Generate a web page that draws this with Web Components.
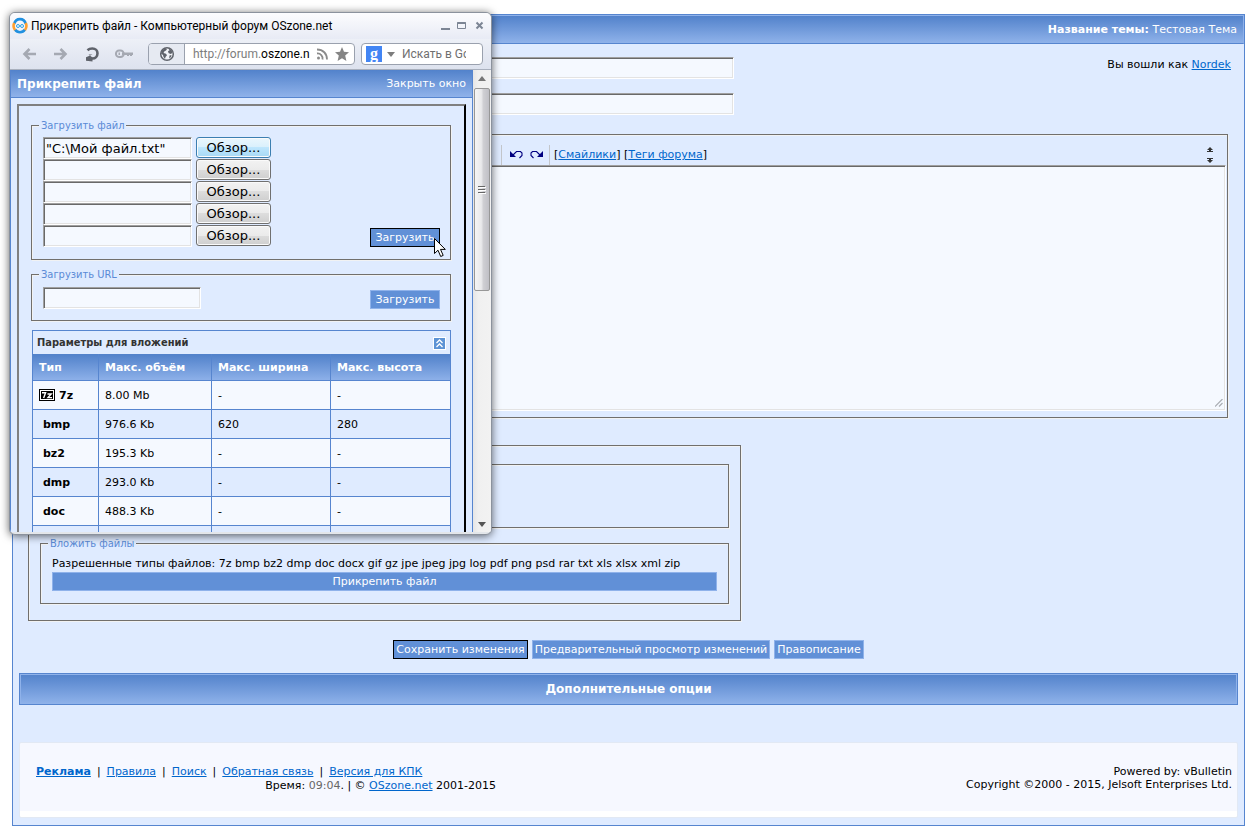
<!DOCTYPE html>
<html lang="ru">
<head>
<meta charset="utf-8">
<title>Компьютерный форум OSzone.net</title>
<style>
  body {
    margin: 0;
    background: #fff;
    font: 11px/14px "DejaVu Sans", Verdana, sans-serif;
    color: #000;
    --panel: #dfebff;
    --field: #f5f9ff;
    --edge: #5685cf;
    --fill: #6190d7;
    --fill-edge: #8fb2ea;
    --bar: linear-gradient(#5282cb, #8fb2ea);
    --link: #0066cc;
    --etch: #716f6c;
    --etch-light: #f1f2f3;
  }
</style>
</head>
<body>
<forum-app></forum-app>

<script>
const base = `
  *, *::before, *::after { box-sizing: border-box; }
  :host { display: block; box-sizing: border-box; }
  a { color: var(--link); text-decoration: underline; }
  .field {
    height: 22px; padding: 0 2px; border: 1px solid; border-color: #a0a0a0 #fff #fff #a0a0a0;
    background: var(--field); box-shadow: inset 1px 1px 0 #696969, inset -1px -1px 0 #e3e3e3;
    font: 13px/18px "DejaVu Sans", Verdana, sans-serif; color: #000; border-radius: 0; outline: 0;
  }
`;

function define(name, css, html, setup) {
  customElements.define(name, class extends HTMLElement {
    constructor() {
      super();
      this.attachShadow({ mode: "open" }).innerHTML = `<style>${base}${css}</style>${html}`;
    }
    connectedCallback() { if (setup) setup(this.shadowRoot, this); }
  });
}

/* Etched frame with an optional caption */
define("group-box", `
  fieldset { margin: 0; min-width: 0; height: 100%; border: 1px solid var(--etch);
    padding: var(--box-padding, 0); box-shadow: 1px 1px 0 var(--etch-light), inset 1px 1px 0 var(--etch-light); }
  legend { margin-left: -4px; padding: 0 2px; background: var(--panel); color: #5a8ad6;
    font: 11px/13px "DejaVu Sans Condensed", Tahoma, sans-serif; }
`, `<fieldset><slot></slot></fieldset>`, (root, host) => {
  const label = host.getAttribute("label");
  if (label) {
    const legend = document.createElement("legend");
    legend.textContent = label;
    root.querySelector("fieldset").prepend(legend);
  }
});

define("push-button", `
  :host { display: inline-block; }
  button { display: block; width: 100%; height: 19px; padding: 1px 2px 0; border: 1px solid var(--fill-edge);
    background: var(--fill); color: #fff; font: 11px/16px "DejaVu Sans", Verdana, sans-serif; white-space: nowrap; }
  :host([primary]) button { border-color: #000; }
`, `<button type="button"><slot></slot></button>`);

define("title-bar", `
  :host { display: flex; align-items: center; justify-content: var(--justify, space-between);
    background: var(--bar); color: #fff; border: 1px solid var(--fill-edge); border-width: 1px 1px 0 0; }
`, `<slot></slot>`);

define("file-row", `
  :host { display: flex; gap: 4px; height: 22px; }
  .field { width: 149px; }
  button { width: 75px; height: 21px; padding: 1px 0 0; border: 1px solid #707070; border-radius: 3px;
    background: linear-gradient(#f2f2f2, #ebebeb 50%, #dddddd 50%, #cfcfcf);
    box-shadow: inset 0 0 0 1px #fafafa; font: 13px/18px "DejaVu Sans", Verdana, sans-serif; color: #000; }
  :host([hot]) button { border-color: #3c7fb1;
    background: linear-gradient(#eaf6fd, #d9f0fc 50%, #bee6fd 50%, #a7d9f5); }
`, `<input class="field" type="text" aria-label="Файл"><button type="button">Обзор...</button>`,
(root, host) => { root.querySelector("input").value = host.getAttribute("value") || ""; });

define("limits-table", `
  table { width: 100%; table-layout: fixed; border-collapse: collapse; border: 1px solid var(--edge); }
  caption { height: 24px; padding: 0 4px; border: 1px solid var(--edge); border-bottom: 0; color: #333;
    font: bold 11px/24px "DejaVu Sans Condensed", Tahoma, sans-serif; text-align: left; }
  .cap { display: flex; justify-content: space-between; align-items: center; }
  .cap button { width: 13px; height: 13px; padding: 0; border: 1px solid #fff; background: #5d93d5; display: block; }
  .cap svg { display: block; }
  thead tr { background: var(--bar); height: 26px; }
  th, td { border: 1px solid var(--edge); padding: 1px 6px 0; text-align: left; font-size: 11px; line-height: 14px; white-space: nowrap; }
  thead th { color: #fff; border-top-color: #5282cb; }
  tbody tr { height: 29px; }
  tbody tr:nth-child(odd) { background: var(--field); }
  tbody th { padding-left: 10px; }
  tbody th.icon { padding-left: 6px; }
  .seven { display: inline-block; width: 16px; height: 12px; margin-right: 4px; vertical-align: -2px; }
`, `<table>
  <caption><div class="cap"><span>Параметры для вложений</span>
    <button type="button" aria-label="Свернуть"><svg width="11" height="11" viewBox="0 0 11 11" fill="none" stroke="#fff" stroke-width="1.3"><path d="M2.5 5 5.5 2l3 3M2.5 9l3-3 3 3"/></svg></button></div></caption>
  <colgroup><col style="width:66px"><col style="width:113px"><col style="width:119px"><col></colgroup>
  <thead><tr><th>Тип</th><th>Макс. объём</th><th>Макс. ширина</th><th>Макс. высота</th></tr></thead>
  <tbody></tbody></table>`, root => {
  const icon = `<svg class="seven" viewBox="0 0 16 12"><path fill="#000" d="M0 0h16v12H0z"/><path fill="#fff" d="M1 1h14v10H1z"/><path fill="#000" d="M2 2h12v8H2z"/><path fill="none" stroke="#fff" stroke-width="1.4" d="M3 3.7h3.6L4.6 9M8.5 5h3.7L9 8.6h4"/></svg>`;
  root.querySelector("tbody").innerHTML = [
    ["7z", "8.00 Mb", "-", "-"], ["bmp", "976.6 Kb", "620", "280"], ["bz2", "195.3 Kb", "-", "-"],
    ["dmp", "293.0 Kb", "-", "-"], ["doc", "488.3 Kb", "-", "-"], ["", "", "", ""]
  ].map(([t, ...c]) => `<tr><th scope="row"${t === "7z" ? ' class="icon"' : ""}>${t === "7z" ? icon : ""}${t}</th>${c.map(v => `<td>${v}</td>`).join("")}</tr>`).join("");
});

define("browser-toolbar", `
  :host { display: flex; align-items: center; height: 31px; padding: 0 8px 0 11px;
    background: linear-gradient(#edf0f7, #dde2ee); border-bottom: 1px solid #a9b0bd; }
  svg { display: block; }
  .nav { display: flex; gap: 13px; flex: 0 0 127px; }
  .nav button, .g, .ico { border: 0; padding: 0; background: none; }
  .box { display: flex; align-items: center; height: 22px; border: 1px solid #9aa1ae; border-radius: 4px; background: #fff; overflow: hidden; }
  .address { flex: 1; }
  .globe { display: flex; align-items: center; justify-content: center; width: 36px; height: 20px; background: #e6eaf2; border-right: 1px solid #9aa1ae; }
  .url { flex: 1; min-width: 0; margin-left: 8px; font: 12px/18px Roboto, "Segoe UI", sans-serif; color: #7d7d7d; white-space: nowrap; overflow: hidden; }
  .url b { font-weight: normal; color: #000; }
  .icons { display: flex; gap: 6px; padding: 0 5px; }
  .search { width: 122px; margin-left: 6px; padding-left: 4px; }
  .g { width: 16px; height: 16px; background: #4285f4; color: #fff; font: bold 16px/12px "Liberation Serif", serif; }
  .tri { margin: 0 7px 0 5px; }
  .search input { width: 64px; border: 0; padding: 0; outline: 0; background: none; font: 12px/18px Roboto, "Segoe UI", sans-serif; }
  .search input::placeholder { color: #6f6f6f; }
`, `
  <div class="nav">
    <button type="button" aria-label="Назад"><svg width="18" height="16" viewBox="0 0 18 16" fill="none" stroke="#a5a9b2" stroke-width="2.6"><path d="M15 8H4M8.5 3 3.5 8l5 5"/></svg></button>
    <button type="button" aria-label="Вперёд"><svg width="18" height="16" viewBox="0 0 18 16" fill="none" stroke="#a5a9b2" stroke-width="2.6"><path d="M2 8h11M8.5 3l5 5-5 5"/></svg></button>
    <button type="button" aria-label="Обновить"><svg width="18" height="16" viewBox="0 0 18 16"><path fill="none" stroke="#5f636b" stroke-width="2.600" d="M4.500 4.200C6 2.800 7.500 2.500 9.300 2.500c3.300 0 5.200 2.100 5.200 4.700 0 3.200-2.200 5.300-5 5.300H8"/><path fill="#5f636b" d="M9.500 8.500v7L3 14.800v-3.500zM9.500 8.500H5.500l4 3z"/></svg></button>
    <button type="button" aria-label="Пароль"><svg width="20" height="16" viewBox="0 0 20 16"><path fill="none" stroke="#a5a9b2" stroke-width="2" d="M2 7.500a3 3 0 0 1 3-3h1.500a3 3 0 0 1 0 6.500H5a3 3 0 0 1-3-3.500z"/><path fill="#a5a9b2" d="M8 6.500h11v2.500h-1v1h-2v-1h-1v1h-2v-1H8zM4.500 6.500h1.500v2.500H4.500z"/></svg></button>
  </div>
  <div class="box address">
    <span class="globe"><svg width="16" height="16" viewBox="0 0 16 16"><circle cx="8" cy="8" r="6.300" fill="#f1f3f7" stroke="#5f636b" stroke-width="1.500"/><path fill="#5f636b" d="M3 4.500 6 2.300l2 .7-1 1.500-1.500.8L4.500 7l2.500.8 1 1.500L6.500 11 6 13 4.500 11 4 9 2 7.500zM9.500 2.500l3 1.500 1 3-2 1-2-1-.5-2 1.500-.5zM10.500 9.500l2-.5-.5 2-1.800 1.500z"/></svg></span>
    <span class="url" role="textbox" contenteditable="true" spellcheck="false" aria-label="Адрес">http://forum.<b>oszone.n</b></span>
    <span class="icons">
      <button type="button" class="ico" aria-label="RSS"><svg width="14" height="14" viewBox="0 0 14 14" fill="none" stroke="#8b8b8b" stroke-width="1.800"><circle cx="3.500" cy="11" r="1.500" fill="#8b8b8b" stroke="none"/><path d="M2 6.500a5 5 0 0 1 5.500 6M2 2.500c6 0 10 4 10 10"/></svg></button>
      <button type="button" class="ico" aria-label="Закладки"><svg width="14" height="14" viewBox="0 0 14 14"><path fill="#858585" d="m7 0 2 4.800 5 .4-3.800 3.400L11.400 14 7 11.200 2.600 14l1.200-5.400L0 5.200l5-.4z"/></svg></button>
    </span>
  </div>
  <div class="box search">
    <button type="button" class="g" aria-label="Поисковая система">g</button>
    <svg class="tri" width="8" height="5" viewBox="0 0 8 5"><path fill="#7d7d7d" d="M0 0h8L4 5z"/></svg>
    <input type="text" placeholder="Искать в Go" aria-label="Поиск">
  </div>`);

define("scroll-strip", `
  :host { display: flex; flex-direction: column; align-items: center; width: 18px; padding: 6px 1px 5px;
    background: linear-gradient(90deg, #e6e6e6, #f0f0f0 30%, #f2f2f2); }
  svg { display: block; flex: none; }
  .thumb { display: flex; align-items: center; justify-content: center; width: 16px; height: 203px; margin: 7px 0 auto;
    border: 1px solid #979797; border-radius: 2px; background: linear-gradient(90deg, #f5f5f5, #e9e9eb 45%, #cfcfd3 60%, #bfbfc5); }
`, `<svg width="8" height="5" viewBox="0 0 8 5"><path fill="#777" d="M0 5h8L4 0z"/></svg>
  <div class="thumb"><svg width="8" height="8" viewBox="0 0 8 8"><path fill="#666" d="M0 0h7v1H0zM0 3h7v1H0zM0 6h7v1H0z"/><path fill="#fff" d="M1 1h7v1H1zM1 4h7v1H1zM1 7h7v1H1z"/></svg></div>
  <svg width="8" height="5" viewBox="0 0 8 5"><path fill="#555" d="M0 0h8L4 5z"/></svg>`);

define("popup-window", `
  :host { display: flex; flex-direction: column; width: 483px; height: 523px; overflow: hidden;
    border: 1px solid #8b929d; border-radius: 6px; background: #e3e6ea; box-shadow: 0 1px 8px rgba(0,0,0,.6); }
  .caption { display: flex; align-items: center; gap: 3px; height: 26px; padding: 0 7px 0 2px; background: linear-gradient(#fcfcfe, #e8ebf5);
    font: 12px/18px Roboto, "Segoe UI", sans-serif; color: #000; flex: none; }
  .caption span { flex: 1; white-space: nowrap; }
  .caption svg { display: block; }
  .view { display: flex; flex: 1; min-height: 0; margin: 0 0 2px; background: var(--panel); }
  .page { flex: 1; min-width: 0; display: flex; flex-direction: column; border-right: 1px solid var(--edge); border-left: 1px solid var(--edge); }
  title-bar { height: 28px; flex: none; padding: 1px 6px 0; border: 0; border-bottom: 1px solid var(--edge); }
  title-bar h1 { margin: 0; font-size: 12px; line-height: 16px; }
  title-bar a { color: #fff; text-decoration: none; }
  .frame { flex: 1; min-height: 0; margin: 6px 6px 0; padding: 13px 13px 0 12px; overflow: hidden;
    border: 2px solid; border-color: #808080 #000 #000 #808080; border-bottom: 0; }
  group-box { margin-bottom: 8px; --box-padding: 5px 10px 12px 11px; }
  .line { display: flex; justify-content: space-between; align-items: flex-end; }
  push-button { width: 70px; }
  .url { width: 158px; }
  .second { --box-padding: 6px 10px 11px 11px; }
  .hover { position: relative; display: flex; }
  .cursor { position: absolute; left: 64px; top: 10px; pointer-events: none; }
  limits-table { margin: 9px 0 0 1px; }
`, `
  <div class="caption">
    <svg width="16" height="18" viewBox="0 0 16 18" fill="none"><path stroke="#2090e0" stroke-width="2.600" d="M2.200 7a6 6.500 0 0 1 11.600 0M3 12.500a6 6 0 0 0 10 0"/><path stroke="#ff9f2e" stroke-width="2.600" d="M2.200 6A7 7 0 0 0 3 13M13.800 6A7 7 0 0 1 13 13"/><circle cx="6" cy="9" r="1.500" stroke="#2ba3e8"/><circle cx="10" cy="9" r="1.500" stroke="#2ba3e8"/></svg>
    <span>Прикрепить файл - Компьютерный форум OSzone.net</span>
    <svg width="44" height="10" viewBox="0 0 44 10" fill="none" stroke="#7c8594" stroke-width="2"><path d="M1 8h9"/><path d="M17.500 2h8" /><path stroke-width="1" d="M17.500 1.500h8v6h-8z"/><path d="m36.500 1.500 6 6M42.500 1.500l-6 6"/></svg>
  </div>
  <browser-toolbar></browser-toolbar>
  <div class="view">
    <div class="page">
      <title-bar><h1>Прикрепить файл</h1><a href="#">Закрыть окно</a></title-bar>
      <div class="frame">
        <group-box label="Загрузить файл"><div class="line">
          <div><file-row hot value='"C:\\Мой файл.txt"'></file-row><file-row></file-row><file-row></file-row><file-row></file-row><file-row></file-row></div>
          <div class="hover"><push-button primary>Загрузить</push-button>
            <svg class="cursor" width="14" height="20" viewBox="0 0 14 20"><path fill="#fff" stroke="#000" d="M.5.5v15l3.500-3.300 2.700 6.300 2.500-1.100-2.700-6h4.800z"/></svg></div>
        </div></group-box>
        <group-box class="second" label="Загрузить URL"><div class="line">
          <input class="field url" type="text" aria-label="Загрузить URL"><push-button>Загрузить</push-button>
        </div></group-box>
        <limits-table></limits-table>
      </div>
    </div>
    <scroll-strip></scroll-strip>
  </div>`);

define("message-editor", `
  .tools { display: flex; align-items: center; height: 30px; padding: 0 14px 0 472px; }
  .tools > * { flex: none; }
  .undo { display: flex; align-items: center; gap: 7px; height: 20px; margin-top: 9px; padding: 0 6px 0 8px; border: 1px solid #c3c6cb; border-width: 0 1px; }
  .undo button, .size button { display: block; padding: 0; border: 0; background: none; }
  svg { display: block; }
  .links { margin: 10px auto 0 4px; }
  .size { display: grid; gap: 4px; margin-top: 10px; }
  .pad { position: relative; }
  .pad textarea { display: block; width: calc(100% - 2px); height: 246px; resize: none; margin: 0 1px 6px; }
  .grip { position: absolute; right: 4px; bottom: 4px; }
`, `<group-box>
  <div class="tools">
    <span class="undo">
      <button type="button" aria-label="Отменить"><svg width="13" height="9" viewBox="0 0 13 9"><path fill="#000080" d="M0 1v6h6z"/><path fill="none" stroke="#000080" stroke-width="1.100" d="M3 5 6.500 1.500h4L12 3v2.500L9.500 8"/></svg></button>
      <button type="button" aria-label="Вернуть"><svg width="13" height="9" viewBox="0 0 13 9"><path fill="#000080" d="M13 1v6H7z"/><path fill="none" stroke="#000080" stroke-width="1.100" d="M10 5 6.500 1.500h-4L1 3v2.500L3.500 8"/></svg></button>
    </span>
    <span class="links">[<a href="#">Смайлики</a>] [<a href="#">Теги форума</a>]</span>
    <span class="size">
      <button type="button" aria-label="Меньше"><svg width="6" height="6" viewBox="0 0 6 6"><path fill="#333" d="M3 0 0 3h2v1H0v1h6V4H4V3h2z"/></svg></button>
      <button type="button" aria-label="Больше"><svg width="6" height="6" viewBox="0 0 6 6"><path fill="#333" d="M3 6 0 3h2V2H0V1h6v1H4v1h2z"/></svg></button>
    </span>
  </div>
  <div class="pad"><textarea class="field" aria-label="Сообщение"></textarea>
  <svg class="grip" width="8" height="8" viewBox="0 0 8 8" stroke="#a9adb3" stroke-width="1.200"><path d="M0 7.500 7.500 0M4 7.500 7.500 4"/></svg></div>
</group-box>`);

define("site-footer", `
  :host { display: flex; justify-content: space-between; height: 76px; padding: 22px 5px 0 16px; border: 1px solid #e2e9f4;
    border-radius: 2px; background: linear-gradient(#f6f8ff 0 92%, #fff 92%); }
  .left { width: 460px; white-space: nowrap; }
  .stamp, .right { text-align: right; }
  i { font-style: normal; color: #666; }
  .right { line-height: 13px; }
  nav { display: flex; gap: 6px; }
`, `
  <div class="left"><nav><a href="#"><b>Реклама</b></a><span>|</span><a href="#">Правила</a><span>|</span><a href="#">Поиск</a><span>|</span><a href="#">Обратная связь</a><span>|</span><a href="#">Версия для КПК</a></nav>
  <div class="stamp">Время: <i>09:04</i>. | © <a href="#">OSzone.net</a> 2001-2015</div></div>
  <div class="right">Powered by: vBulletin<br>Copyright ©2000 - 2015, Jelsoft Enterprises Ltd.</div>`);

define("forum-app", `
  :host { position: relative; padding: 14px 5px 5px 12px; }
  main { border: 1px solid var(--edge); background: var(--panel); }
  .top { height: 29px; padding: 0 6px; border-bottom: 1px solid var(--edge); --justify: flex-end; }
  .body { padding: 13px 16px 0 15px; }
  .head { display: flex; justify-content: space-between; align-items: flex-start; margin: 0 -4px 19px 0; }
  .head span { padding: 1px 1px 0 0; }
  .fields { display: grid; gap: 14px; width: 706px; }
  .attach { max-width: 713px; margin: 27px 0 19px; --box-padding: 18px 11px 16px; }
  .attach group-box { --box-padding: 6px 11px 12px; }
  .attach .empty { height: 64px; margin-bottom: 9px; }
  .types { white-space: nowrap; line-height: 16px; }
  .attach push-button { display: block; }
  .actions { display: flex; justify-content: center; gap: 4px; }
  .more { height: 32px; margin: 14px 6px 37px; border: 1px solid var(--edge); box-shadow: inset 0 0 0 1px var(--fill-edge); --justify: center; }
  .more h2 { margin: 0; font-size: 12px; line-height: 16px; }
  site-footer { margin: 0 6px 7px; }
  popup-window { position: absolute; left: 9px; top: 12px; }
`, `
  <main>
    <title-bar class="top"><span><b>Название темы:</b> Тестовая Тема</span></title-bar>
    <div class="body">
      <div class="head">
        <div class="fields"><input class="field" type="text" aria-label="Причина"><input class="field" type="text" aria-label="Заголовок"></div>
        <span>Вы вошли как <a href="#">Nordek</a></span>
      </div>
      <message-editor></message-editor>
      <group-box class="attach">
        <group-box class="empty"></group-box>
        <group-box label="Вложить файлы">
          <div class="types">Разрешенные типы файлов: 7z bmp bz2 dmp doc docx gif gz jpe jpeg jpg log pdf png psd rar txt xls xlsx xml zip</div>
          <push-button>Прикрепить файл</push-button>
        </group-box>
      </group-box>
    </div>
    <div class="actions"><push-button primary>Сохранить изменения</push-button><push-button>Предварительный просмотр изменений</push-button><push-button>Правописание</push-button></div>
    <title-bar class="more"><h2>Дополнительные опции</h2></title-bar>
    <site-footer></site-footer>
  </main>
  <popup-window></popup-window>`);
</script>
</body>
</html>
